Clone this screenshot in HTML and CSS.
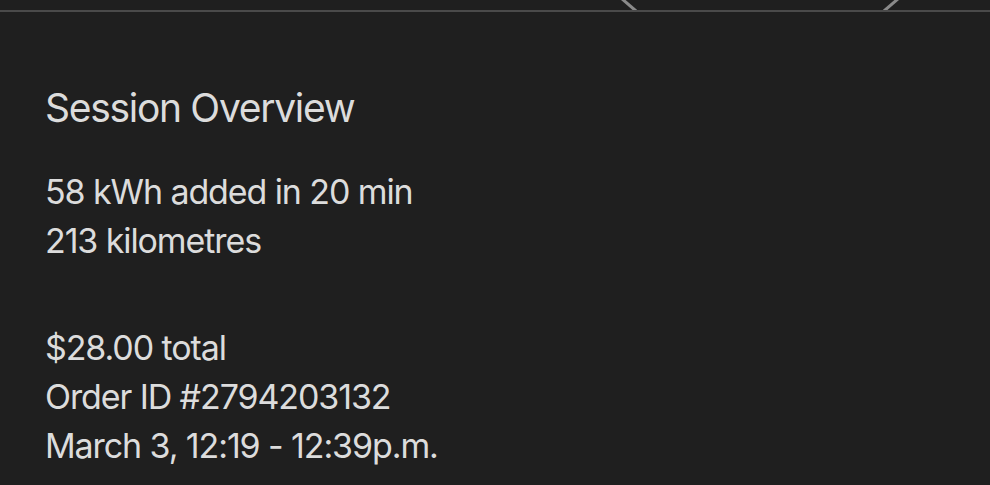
FILE: index.html
```html
<html>
<head>
	<title>Session Overview</title>
	<link rel="stylesheet" href="styles.css">
</head>
<body>

<div class="topbar">
	<svg class="tab" width="990" height="10" viewBox="0 0 990 10">
		<path d="M621 -2 L636 11" stroke="#8a8a8a" stroke-width="3" fill="none"/>
		<path d="M899 -2 L884 11" stroke="#8a8a8a" stroke-width="3" fill="none"/>
	</svg>
</div>

<div class="overview">
	<h1 class="title">Session Overview</h1>
	<div class="block">
		<div class="line">58 kWh added in 20 min</div>
		<div class="line">213 kilometres</div>
	</div>
	<div class="block">
		<div class="line">$28.00 total</div>
		<div class="line">Order ID #2794203132</div>
		<div class="line">March 3, 12:19 - 12:39p.m.</div>
	</div>
</div>

</body>
</html>
```

FILE: styles.css
```css
body {
	margin: 0;
	background: #1f1f1f;
	color: #dcdcdc;
	font-family: Inter, "Noto Sans", sans-serif;
}
.topbar {
	height: 10px;
	border-bottom: 2px solid #4a4a4a;
	overflow: hidden;
}
.tab {
	display: block;
}
.overview {
	padding: 0 45px;
}
.title {
	margin: 72px 0 0 0;
	font-size: 39px;
	font-weight: 400;
	line-height: 48px;
	letter-spacing: -1.3px;
}
.block {
	margin-top: 35px;
}
.block + .block {
	margin-top: 58px;
}
.line {
	font-size: 34px;
	line-height: 49px;
	letter-spacing: -1.1px;
}
```
